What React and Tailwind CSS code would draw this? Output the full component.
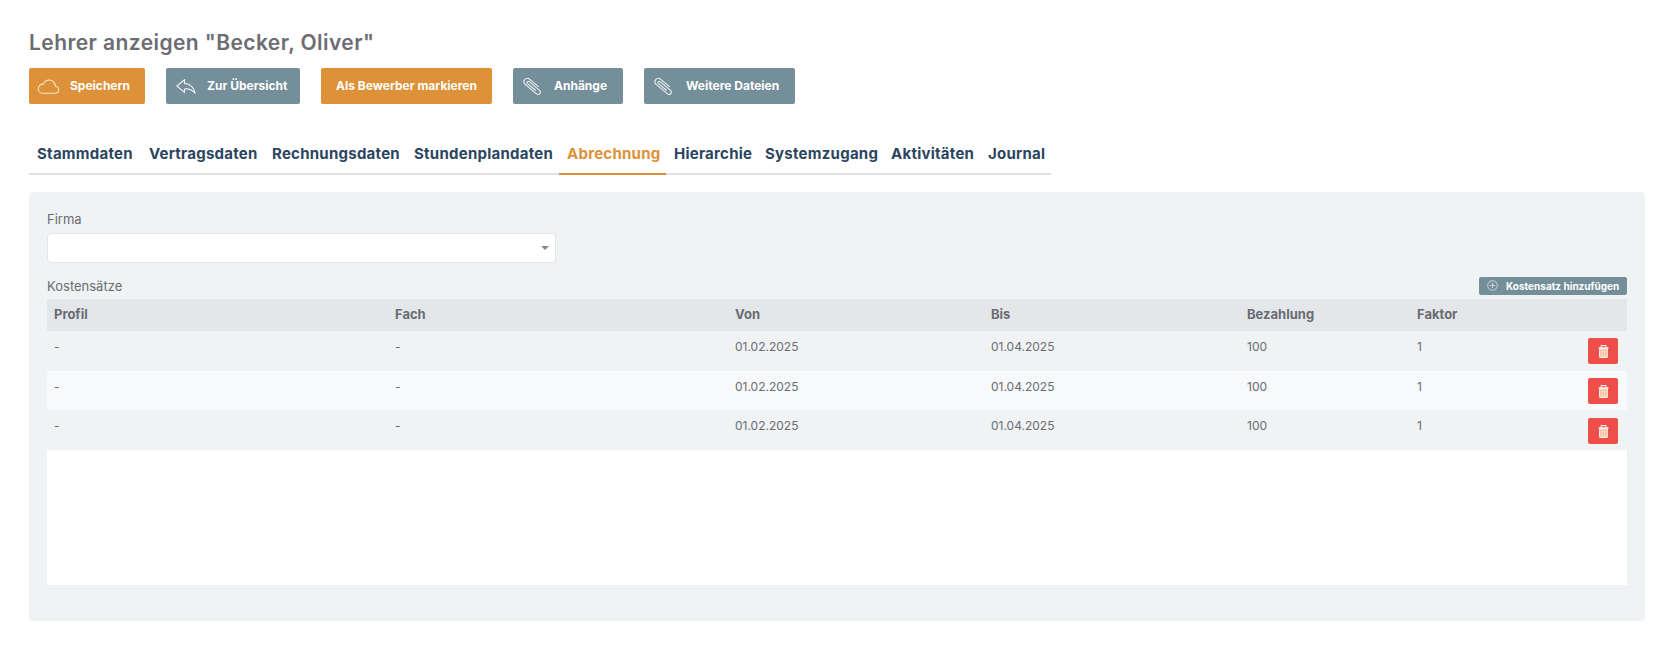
const font = { fontFamily: '"Inter", "Liberation Sans", sans-serif' };

const CloudIcon = () => (
  <svg width="23" height="15" viewBox="0 0 23 16" fill="none" stroke="#f8e8d2" strokeWidth="1.1">
    <path d="M5 15.2h13.5c2.2 0 3.9-1.6 3.9-3.7 0-2-1.5-3.5-3.4-3.7C18.500 4.400 16 1 12.300 1 9.500 1 7.300 2.700 6.300 5.200 3 5.400 .6 7.800 .6 10.600c0 2.600 2 4.600 4.400 4.600z" />
  </svg>
);

const ReplyIcon = () => (
  <svg width="20" height="15" viewBox="0 0 20 15" fill="none" stroke="#f0f4f6" strokeWidth="1.1">
    <path d="M8.500 .8L.8 7l7.700 6.400V10C12 9.500 16 10.500 19 14.200 18.500 8.500 14 4.800 8.500 4.400z" />
  </svg>
);

const ClipIcon = () => (
  <svg width="22" height="19" viewBox="-11 -9.500 22 19" fill="none" stroke="#f0f4f6" strokeWidth="1.1">
    <path
      transform="rotate(40) scale(0.93)"
      d="M5 1.400H-6.500A1.400 1.400 0 0 1-6.500-1.400H8A2.500 2.500 0 0 1 8 3.600H-8A3.600 3.600 0 0 1-8-3.600H5"
    />
  </svg>
);

const PlusIcon = () => (
  <svg width="11" height="11" viewBox="0 0 11 11" fill="none" stroke="#dfe6ea" strokeWidth="0.8">
    <circle cx="5.500" cy="5.500" r="4.800" />
    <path d="M5.500 2.800v5.400M2.800 5.500h5.400" />
  </svg>
);

const TrashIcon = () => (
  <svg width="11" height="13" viewBox="0 0 11 13" fill="none">
    <path d="M3 2.500V.6h5v1.900" stroke="#fff" strokeWidth="1" />
    <path d="M.5 2.900h10" stroke="#fff" strokeWidth="1.200" />
    <path d="M1.700 3.500h7.600v8.900H1.700z" stroke="#fff" strokeWidth="1" fill="#f9b98e" />
    <path d="M4.300 4v8M6.700 4v8" stroke="#fff" strokeWidth="0.8" />
  </svg>
);

const ToolbarButton = ({ icon, label, orange, className }) => (
  <button
    className={`flex h-[36px] items-center rounded-[2px] text-[12px] font-bold text-white ${orange ? "bg-[#dd9138]" : "bg-[#748e9a]"} ${className}`}
  >
    {icon}
    {label}
  </button>
);

const tabs = [
  ["Stammdaten", "w-[112px]"],
  ["Vertragsdaten", "w-[123px]"],
  ["Rechnungsdaten", "w-[142px]"],
  ["Stundenplandaten", "w-[153px]"],
  ["Abrechnung", "w-[107px]"],
  ["Hierarchie", "w-[91px]"],
  ["Systemzugang", "w-[126px]"],
  ["Aktivitäten", "w-[97px]"],
  ["Journal", "w-[71px]"],
];

const rows = [
  { bg: "bg-[#eff3f4] h-[40px]", btn: "mt-[7px]" },
  { bg: "bg-[#f7f9fa] h-[39px]", btn: "mt-[7px]" },
  { bg: "bg-[#eff3f4] h-[40px]", btn: "mt-[8px]" },
];

const cols = "grid grid-cols-[341px_340px_256px_256px_170px_1fr]";

export default function App() {
  return (
    <div className="h-[658px] w-[1671px] bg-white pl-[29px] pt-[30px] text-[#6b6b72]" style={font}>
      <h1 className="h-[26px] text-[21px] leading-[26px] font-semibold tracking-[0.42px] text-[#6c6c73]">
        Lehrer anzeigen "Becker, Oliver"
      </h1>

      <div className="mt-[12px] flex">
        <ToolbarButton
          orange
          className="w-[116px]"
          icon={<span className="mr-[10px] ml-[8px] flex"><CloudIcon /></span>}
          label="Speichern"
        />
        <ToolbarButton
          className="ml-[21px] w-[134px]"
          icon={<span className="mr-[11px] ml-[10px] flex"><ReplyIcon /></span>}
          label="Zur Übersicht"
        />
        <ToolbarButton orange className="ml-[21px] w-[171px] justify-center" label="Als Bewerber markieren" />
        <ToolbarButton
          className="ml-[21px] w-[110px]"
          icon={<span className="mr-[10px] ml-[9px] flex"><ClipIcon /></span>}
          label="Anhänge"
        />
        <ToolbarButton
          className="ml-[21px] w-[151px]"
          icon={<span className="mr-[11px] ml-[9px] flex"><ClipIcon /></span>}
          label="Weitere Dateien"
        />
      </div>

      <div className="mt-[32px] flex h-[39px] w-[1022px] border-b-2 border-[#dee2e6]">
        {tabs.map(([name, width]) => (
          <div
            key={name}
            className={`h-[39px] pl-[8px] text-[15px] leading-[35px] font-bold tracking-[0.25px] ${width} ${name === "Abrechnung" ? "border-b-2 border-[#dd9138] text-[#dd9138]" : "text-[#2b4560]"}`}
          >
            {name}
          </div>
        ))}
      </div>

      <div className="mt-[17px] h-[429px] w-[1616px] rounded-[4px] bg-[#eff3f4] pt-[18px] pr-[18px] pl-[18px]">
        <div className="text-[13px] leading-[18px]">Firma</div>
        <div className="relative mt-[5px] h-[30px] w-[509px] rounded-[4px] border border-[#e3e6e9] bg-white">
          <span className="absolute top-[12px] right-[6px] h-0 w-0 border-x-[4px] border-t-[4px] border-x-transparent border-t-[#888]" />
        </div>

        <div className="mt-[14px] flex h-[22px] items-start justify-between">
          <div className="text-[13px] leading-[18px]">Kostensätze</div>
          <button className="flex h-[18px] w-[148px] items-center rounded-[2px] bg-[#748e9a] pl-[8px] text-[10px] font-bold text-white">
            <span className="mr-[8px] -translate-y-[1px]"><PlusIcon /></span>
            Kostensatz hinzufügen
          </button>
        </div>

        <div className={`${cols} h-[32px] items-center bg-[#e3e7e9] pb-[1px] text-[13px] font-bold text-[#6b6b72]`}>
          {["Profil", "Fach", "Von", "Bis", "Bezahlung", "Faktor"].map((h) => (
            <div key={h} className="pl-[7px]">{h}</div>
          ))}
        </div>

        {rows.map((row, i) => (
          <div key={i} className={`${cols} ${row.bg} text-[12px] leading-[32px]`}>
            <div className="pl-[7px]">-</div>
            <div className="pl-[7px]">-</div>
            <div className="pl-[7px]">01.02.2025</div>
            <div className="pl-[7px]">01.04.2025</div>
            <div className="pl-[7px]">100</div>
            <div className="flex justify-between pl-[7px]">
              1
              <button className={`${row.btn} mr-[9px] flex h-[26px] w-[30px] items-center justify-center rounded-[2px] bg-[#ef4f4a]`}>
                <TrashIcon />
              </button>
            </div>
          </div>
        ))}

        <div className="h-[135px] bg-white" />
      </div>
    </div>
  );
}
